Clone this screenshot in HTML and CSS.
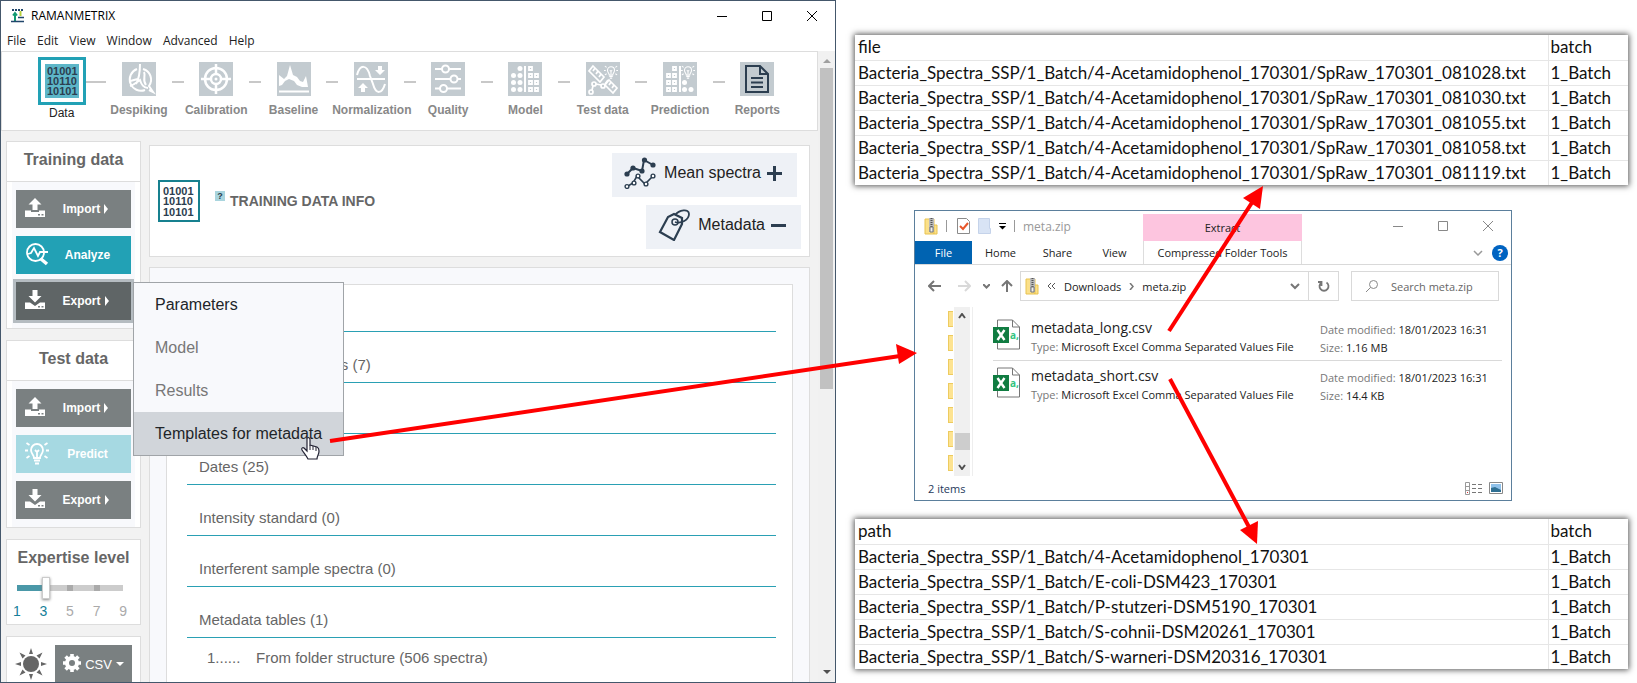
FILE: index.html
```html
<!DOCTYPE html>
<html lang="en">
<head>
<meta charset="UTF-8">
<meta name="viewport" content="width=device-width, initial-scale=1.0">
<title>RAMANMETRIX</title>
<link rel="stylesheet" href="styles.css">
</head>
<body>

<!-- shared symbols -->
<svg class="defs" width="0" height="0">
    <symbol id="upload" viewBox="0 0 20 19">
        <path d="M10 0l6.500 6.500h-4V12h-5V6.500h-4z M0 12.500h6v1.500h8v-1.500h6V19H0z" fill="#fff"/>
        <path d="M13 16h2v1.500h-2z M16.500 16h2v1.500h-2z" fill="#7a8081"/>
    </symbol>
    <symbol id="download" viewBox="0 0 20 19">
        <path d="M7.500 0h5v6h4L10 12.500 3.500 6h4z M0 12.500h5l5 3.500 5-3.500h5V19H0z" fill="#fff"/>
        <path d="M13 16h2v1.500h-2z M16.500 16h2v1.500h-2z" fill="#7a8081"/>
    </symbol>
    <symbol id="bulb" viewBox="0 0 24 24">
        <path d="M9 17c0-3-3-4-3-8a6 6 0 0 1 12 0c0 4-3 5-3 8z M12 16v-5l-2-2 M12 11l2-2 M9 19.500h6 M10 22.500h4 M0 9.500h3 M21 9.500h3 M1.500 2l3 2 M22.500 2l-3 2 M1.500 17l3-2 M22.500 17l-3-2" fill="none" stroke="currentColor" stroke-width="1.800"/>
    </symbol>
    <symbol id="zip" viewBox="0 0 14 17">
        <path d="M1 1h9v15H1z" fill="#fbe08a" stroke="#e8c350"/>
        <path d="M10 7h3v9h-3z" fill="#fbe08a" stroke="#e8c350"/>
        <path d="M5 0h5v14H5z" fill="#b9b9b9"/>
        <path d="M7.500 0v9" stroke="#555" stroke-width="2" stroke-dasharray="1 1"/>
        <path d="M6 9h3v5H6z" fill="#eee" stroke="#777"/>
    </symbol>
    <symbol id="csv" viewBox="0 0 28 31">
        <path d="M4.500 1h15l7 7v22h-22z" fill="#fff" stroke="#767676"/>
        <path d="M19.500 1v7h7" fill="none" stroke="#767676"/>
        <path d="M0 8h16v16H0z" fill="#107c41"/>
        <path d="M4.500 11l7 10M11.500 11l-7 10" stroke="#fff" stroke-width="2.400"/>
    </symbol>
    <symbol id="up-caret" viewBox="0 0 8 5"><path d="M0 5l4-4 4 4z" fill="#a0a0a0"/></symbol>
</svg>

<div class="page">

    <section class="app">
        <header class="titlebar">
            <svg class="logo" width="13" height="14" viewBox="0 0 13 14">
                <path d="M1 1h11" stroke="#20466b" stroke-width="2" stroke-dasharray="2 1"/>
                <path d="M4 12V4M2 6.500L4 4l2 2.500" stroke="#129a72" stroke-width="2" fill="none"/>
                <path d="M9.500 2v5" stroke="#b6cf3c" stroke-width="2"/>
                <path d="M7 8.500h6M0 12.500h13" stroke="#20466b" stroke-width="1.500"/>
            </svg>
            <span class="app-name">RAMANMETRIX</span>
            <div class="win-buttons">
                <button type="button" aria-label="Minimize"><svg width="12" height="12"><path d="M1 6.500h10" stroke="#000"/></svg></button>
                <button type="button" aria-label="Maximize"><svg width="12" height="12"><path d="M1.500 1.500h9v9h-9z" stroke="#000" fill="none"/></svg></button>
                <button type="button" aria-label="Close"><svg width="12" height="12"><path d="M1 1l10 10M11 1L1 11" stroke="#000"/></svg></button>
            </div>
        </header>
        <nav class="menubar">
            <button type="button">File</button>
            <button type="button">Edit</button>
            <button type="button">View</button>
            <button type="button">Window</button>
            <button type="button">Advanced</button>
            <button type="button">Help</button>
        </nav>

        <div class="viewport">
            <div class="content">
                <ol class="steps">
                    <li class="step current">
                        <div class="step-row">
                            <i></i>
                            <a href="#data" class="step-box" aria-label="Data"><svg width="34" height="34" viewBox="0 0 34 34"><path d="M0 0h34v34H0z" fill="#5db6c8"/><g class="bits"><text x="2" y="11">01001</text><text x="2" y="21">10110</text><text x="2" y="31">10101</text></g></svg></a>
                            <i></i>
                        </div>
                        <span>Data</span>
                    </li>
                    <li class="step">
                        <div class="step-row"><i></i>
                            <svg width="34" height="34" viewBox="0 0 34 34"><path d="M0 0h34v34H0z" class="tile"/><g fill="none" stroke="#fff" stroke-width="2"><path d="M15 7a11 11 0 1 0 8 21M21 7a11 11 0 0 1 6 17l4 6-4-2"/><path d="M18 2c0 9-1 15-4 20M7 19c4 0 6-2 10-2M8 24c4-1 7-4 10-6 1 4 4 8 8 8M22 10c2 4-2 8 2 13"/></g></svg>
                        <i></i></div>
                        <span>Despiking</span>
                    </li>
                    <li class="step">
                        <div class="step-row"><i></i>
                            <svg width="34" height="34" viewBox="0 0 34 34"><path d="M0 0h34v34H0z" class="tile"/><g fill="none" stroke="#fff" stroke-width="2.500"><circle cx="17" cy="17" r="11"/><circle cx="17" cy="17" r="5"/><path d="M17 2v10M17 22v10M2 17h10M22 17h10"/></g><circle cx="17" cy="17" r="1.500" fill="#fff"/></svg>
                        <i></i></div>
                        <span>Calibration</span>
                    </li>
                    <li class="step">
                        <div class="step-row"><i></i>
                            <svg width="34" height="34" viewBox="0 0 34 34"><path d="M0 0h34v34H0z" class="tile"/><path d="M2 13l5 4 3-3 3-11 3 10 4 2 3 4 3 1 3-6 2 11-6 0-5-2-3-4-5-2-4 2-3 4-3 1z" fill="#fff"/><path d="M2 29.500h30" stroke="#fff" stroke-width="2"/></svg>
                        <i></i></div>
                        <span>Baseline</span>
                    </li>
                    <li class="step">
                        <div class="step-row"><i></i>
                            <svg width="34" height="34" viewBox="0 0 34 34"><path d="M0 0h34v34H0z" class="tile"/><path d="M3 17h28M3 13C6 2 13 2 16 14l3 8c3 11 9 10 12 0" fill="none" stroke="#fff" stroke-width="2"/><path d="M24 4h4v4h3l-5 5-5-5h3zM7 30h4v-4h3l-5-5-5 5h3z" fill="#fff"/></svg>
                        <i></i></div>
                        <span>Normalization</span>
                    </li>
                    <li class="step">
                        <div class="step-row"><i></i>
                            <svg width="34" height="34" viewBox="0 0 34 34"><path d="M0 0h34v34H0z" class="tile"/><g fill="none" stroke="#fff" stroke-width="2"><path d="M4 7h7M18 7h12M4 17h16M26 17h4M4 26.500h5M16 26.500h14"/><circle cx="14.500" cy="7" r="3.500"/><circle cx="23" cy="17" r="3.500"/><circle cx="12.500" cy="26.500" r="3.500"/></g></svg>
                        <i></i></div>
                        <span>Quality</span>
                    </li>
                    <li class="step">
                        <div class="step-row"><i></i>
                            <svg width="34" height="34" viewBox="0 0 34 34"><path d="M0 0h34v34H0z" class="tile"/><g fill="#fff"><circle cx="12" cy="6.500" r="2.500"/><circle cx="5.500" cy="13.500" r="2.500"/><circle cx="12" cy="13.500" r="2.500"/><circle cx="5.500" cy="20.500" r="2.500"/><circle cx="12" cy="20.500" r="2.500"/><circle cx="5.500" cy="27.500" r="2.500"/><circle cx="12" cy="27.500" r="2.500"/><path d="M16 4h2v26h-2z"/></g><path d="M21 5h3v3h-3z M21 12h3v3h-3z M27 12h3v3h-3z M21 19h3v3h-3z M27 19h3v3h-3z M21 26h3v3h-3z M27 26h3v3h-3z" fill="none" stroke="#fff" stroke-width="1.800"/></svg>
                        <i></i></div>
                        <span>Model</span>
                    </li>
                    <li class="step">
                        <div class="step-row"><i></i>
                            <svg width="34" height="34" viewBox="0 0 34 34"><path d="M0 0h34v34H0z" class="tile"/><g fill="none" stroke="#fff" stroke-width="1.700"><path d="M7 4l11 11-4 5L3 9z M9 6L7 9M12 9l-2 3M15 12l-2 3"/><path d="M23 18l8 8-4 5-8-8z M25 20l-2 3M28 23l-2 3"/><circle cx="5" cy="30" r="2"/><circle cx="8" cy="22" r="2"/><circle cx="17" cy="24" r="2"/><path d="M6 28l1-4M10 22l5 1M19 22l3-4"/></g><use href="#bulb" x="18" y="3" width="14" height="14" color="#fff"/></svg>
                        <i></i></div>
                        <span>Test data</span>
                    </li>
                    <li class="step">
                        <div class="step-row"><i></i>
                            <svg width="34" height="34" viewBox="0 0 34 34"><path d="M0 0h34v34H0z" class="tile"/><path d="M10 5h3v3h-3z M4 12h3v3H4z M10 12h3v3h-3z M4 19h3v3H4z M10 19h3v3h-3z M4 26h3v3H4z M10 26h3v3h-3z" fill="none" stroke="#fff" stroke-width="1.800"/><path d="M16 4h2v26h-2z" fill="#fff"/><g fill="#fff"><circle cx="21.500" cy="20.500" r="2.500"/><circle cx="21.500" cy="27.500" r="2.500"/><circle cx="28" cy="27.500" r="2.500"/></g><use href="#bulb" x="18" y="3" width="14" height="14" color="#fff"/></svg>
                        <i></i></div>
                        <span>Prediction</span>
                    </li>
                    <li class="step">
                        <div class="step-row"><i></i>
                            <svg width="34" height="34" viewBox="0 0 34 34"><path d="M0 0h34v34H0z" class="tile"/><g fill="none" stroke="#2c3e50" stroke-width="2"><path d="M6 4h14l8 8v18H6z M20 4v8h8"/><path d="M11 16h12M11 20.500h12M11 25h12"/></g></svg>
                        <i></i></div>
                        <span>Reports</span>
                    </li>
                </ol>

                <div class="workspace">
                    <aside class="sidebar">
                        <section class="panel">
                            <h2>Training data</h2>
                            <div class="actions">
                                <button type="button" class="action"><svg width="20" height="19"><use href="#upload"/></svg><span>Import<i class="arrow"></i></span></button>
                                <button type="button" class="action teal"><svg width="24" height="24" viewBox="0 0 24 24"><g fill="none" stroke="#fff" stroke-width="1.800"><circle cx="10.500" cy="10.500" r="8.500"/><path d="M3 12l3-1 3-5 4 8 2-4h8"/></g><path d="M16 17l6 5" stroke="#fff" stroke-width="3.500"/></svg><span>Analyze</span></button>
                                <div class="dropdown">
                                    <button type="button" class="action open" aria-expanded="true"><svg width="20" height="19"><use href="#download"/></svg><span>Export<i class="arrow"></i></span></button>
                                    <div class="menu">
                                        <button type="button">Parameters</button>
                                        <button type="button" disabled>Model</button>
                                        <button type="button" disabled>Results</button>
                                        <button type="button" class="hover">Templates for metadata</button>
                                    </div>
                                </div>
                            </div>
                        </section>

                        <section class="panel">
                            <h2>Test data</h2>
                            <div class="actions">
                                <button type="button" class="action"><svg width="20" height="19"><use href="#upload"/></svg><span>Import<i class="arrow"></i></span></button>
                                <button type="button" class="action pale"><svg width="24" height="24"><use href="#bulb"/></svg><span>Predict</span></button>
                                <button type="button" class="action"><svg width="20" height="19"><use href="#download"/></svg><span>Export<i class="arrow"></i></span></button>
                            </div>
                        </section>

                        <section class="panel level">
                            <label for="level">Expertise level</label>
                            <input type="range" id="level" min="1" max="9" step="2" value="3">
                            <div class="numbers"><b>1</b><b>3</b><span>5</span><span>7</span><span>9</span></div>
                        </section>

                        <section class="panel bottom">
                            <svg width="32" height="32" viewBox="0 0 32 32"><circle cx="16" cy="16" r="8" fill="#666"/><path d="M14 6l2-6 2 6z M14 26l2 6 2-6z M6 14l-6 2 6 2z M26 14l6 2-6 2z M7.500 10.500L4.500 4.500l6 3z M24.500 10.500l3-6-6 3z M7.500 21.500l-3 6 6-3z M24.500 21.500l3 6-6-3z" fill="#666"/></svg>
                            <button type="button" class="csv-button">
                                <svg width="18" height="18" viewBox="0 0 18 18"><circle cx="9" cy="9" r="5" fill="none" stroke="#fff" stroke-width="4"/><path d="M9 0v3M9 15v3M0 9h3M15 9h3M2.600 2.600l2.200 2.200M13.200 13.200l2.200 2.200M2.600 15.400l2.200-2.200M13.200 4.800l2.200-2.200" stroke="#fff" stroke-width="3.600"/></svg>
                                <span>CSV</span><i class="caret"></i>
                            </button>
                        </section>
                    </aside>

                    <main class="main">
                        <section class="info">
                            <svg class="info-icon" width="42" height="42" viewBox="0 0 42 42"><path d="M1 1h40v40H1z" fill="#fff" stroke="#16808f" stroke-width="2"/><g class="bits"><text x="5" y="15">01001</text><text x="5" y="25">10110</text><text x="5" y="36">10101</text></g></svg>
                            <h1><sup>?</sup>TRAINING DATA INFO</h1>
                            <div class="toggles">
                                <button type="button" class="toggle spectra">
                                    <svg width="32" height="32" viewBox="0 0 32 32"><g fill="none" stroke="#2c3e50" stroke-width="2"><path d="M3 17l6-6 9 3L20 3l9 5"/><path d="M4 29l5-3 4-7 8 8 8-8" stroke-width="1.600"/></g><g fill="#2c3e50"><circle cx="3" cy="17" r="2.600"/><circle cx="9" cy="11" r="2.600"/><circle cx="18" cy="14" r="2.600"/><circle cx="20.500" cy="3" r="2.600"/><circle cx="29" cy="8" r="2.600"/></g><g fill="#fff" stroke="#2c3e50" stroke-width="1.400"><circle cx="3" cy="29.500" r="1.900"/><circle cx="10" cy="26" r="1.900"/><circle cx="14" cy="19" r="1.900"/><circle cx="22" cy="27" r="1.900"/><circle cx="29" cy="19" r="1.900"/></g></svg>
                                    <span>Mean spectra</span>
                                    <svg width="15" height="15"><path d="M0 7.500h15M7.500 0v15" stroke="#2c3e50" stroke-width="3"/></svg>
                                </button>
                                <button type="button" class="toggle">
                                    <svg width="32" height="32" viewBox="0 0 32 32"><g fill="none" stroke="#2c3e50"><path d="M2 23L10 8l6-3 8 4v6l-8 16z" stroke-width="2.200"/><circle cx="17" cy="13" r="3" stroke-width="1.500"/><path d="M17 13c6 2 14-2 14-8 0-6-10-4-14 1" stroke-width="1.800"/></g></svg>
                                    <span>Metadata</span>
                                    <svg width="15" height="15"><path d="M0 7.500h15" stroke="#2c3e50" stroke-width="3"/></svg>
                                </button>
                            </div>
                        </section>

                        <section class="details">
                            <div class="list">
                                <h3></h3>
                                <h3>Reference substances (7)</h3>
                                <h3></h3>
                                <h3>Dates (25)</h3>
                                <h3>Intensity standard (0)</h3>
                                <h3>Interferent sample spectra (0)</h3>
                                <h3>Metadata tables (1)</h3>
                                <p><span>1......</span>From folder structure (506 spectra)</p>
                            </div>
                        </section>
                    </main>
                </div>
            </div>
            <div class="scroll">
                <svg width="8" height="5"><use href="#up-caret"/></svg>
                <div class="scroll-thumb"></div>
                <svg width="8" height="5"><path d="M0 0h8L4 4z" fill="#505050"/></svg>
            </div>
        </div>
    </section>

    <section class="side">
        <table class="sheet">
            <tr><th>file</th><th class="batch">batch</th></tr>
            <tr><td>Bacteria_Spectra_SSP/1_Batch/4-Acetamidophenol_170301/SpRaw_170301_081028.txt</td><td>1_Batch</td></tr>
            <tr><td>Bacteria_Spectra_SSP/1_Batch/4-Acetamidophenol_170301/SpRaw_170301_081030.txt</td><td>1_Batch</td></tr>
            <tr><td>Bacteria_Spectra_SSP/1_Batch/4-Acetamidophenol_170301/SpRaw_170301_081055.txt</td><td>1_Batch</td></tr>
            <tr><td>Bacteria_Spectra_SSP/1_Batch/4-Acetamidophenol_170301/SpRaw_170301_081058.txt</td><td>1_Batch</td></tr>
            <tr><td>Bacteria_Spectra_SSP/1_Batch/4-Acetamidophenol_170301/SpRaw_170301_081119.txt</td><td>1_Batch</td></tr>
        </table>

        <section class="explorer">
            <header class="ex-title">
                <svg width="14" height="17"><use href="#zip"/></svg>
                <i class="bar"></i>
                <svg class="check" width="13" height="16" viewBox="0 0 13 16"><path d="M.5.5h9l3 3v12H.5z" fill="#fff" stroke="#8a8a8a"/><path d="M3 8l3 3 5-6" fill="none" stroke="#e8562a" stroke-width="2"/></svg>
                <svg width="13" height="16" viewBox="0 0 13 16"><path d="M.5.5h11v10h1v5H.5z" fill="#d9e4f5" stroke="#c5d3ea"/></svg>
                <svg width="7" height="7"><path d="M0 .5h7" stroke="#000"/><path d="M0 3h7L3.500 6.500z"/></svg>
                <i class="bar"></i>
                <span class="zip-name">meta.zip</span>
                <span class="extract">Extract</span>
                <div class="ex-buttons">
                    <button type="button" aria-label="Minimize"><svg width="12" height="12"><path d="M1 6.500h10" stroke="#888"/></svg></button>
                    <button type="button" aria-label="Maximize"><svg width="12" height="12"><path d="M1.500 1.500h9v9h-9z" stroke="#888" fill="none"/></svg></button>
                    <button type="button" aria-label="Close"><svg width="12" height="12"><path d="M1 1l10 10M11 1L1 11" stroke="#888"/></svg></button>
                </div>
            </header>
            <nav class="ribbon">
                <button type="button" class="file">File</button>
                <button type="button">Home</button>
                <button type="button">Share</button>
                <button type="button">View</button>
                <button type="button" class="tools">Compressed Folder Tools</button>
                <span class="ribbon-right">
                    <svg width="10" height="6"><path d="M1 1l4 4 4-4" fill="none" stroke="#999" stroke-width="1.500"/></svg>
                    <button type="button" class="help">?</button>
                </span>
            </nav>
            <div class="address">
                <svg width="13" height="12"><path d="M13 6H2M6 1L1 6l5 5" fill="none" stroke="#767676" stroke-width="2"/></svg>
                <svg class="forward" width="13" height="12"><path d="M0 6h11M7 1l5 5-5 5" fill="none" stroke="#d9d9d9" stroke-width="2"/></svg>
                <svg class="recent" width="7" height="5"><path d="M0 0l3.500 3.500L7 0" fill="none" stroke="#767676" stroke-width="2"/></svg>
                <svg class="up" width="12" height="12"><path d="M6 12V2M1 6l5-5 5 5" fill="none" stroke="#767676" stroke-width="2"/></svg>
                <div class="path">
                    <svg width="14" height="17"><use href="#zip"/></svg>
                    <svg width="9" height="7"><path d="M4 0L1 3l3 3M8 0L5 3l3 3" fill="none" stroke="#555"/></svg>
                    <a href="#downloads">Downloads</a>
                    <svg width="5" height="7"><path d="M1 0l3 3.500L1 7" fill="none" stroke="#777" stroke-width="1.500"/></svg>
                    <a href="#meta">meta.zip</a>
                    <svg class="path-more" width="10" height="7"><path d="M1 1l4 4 4-4" fill="none" stroke="#767676" stroke-width="2"/></svg>
                    <button type="button" class="refresh" aria-label="Refresh"><svg width="12" height="12"><path d="M8.500 2.500a4.500 4.500 0 1 1-5 0M3.500 6V2H0" fill="none" stroke="#767676" stroke-width="1.800"/></svg></button>
                </div>
                <label class="search">
                    <svg width="12" height="12"><circle cx="7.500" cy="4.500" r="4" fill="none" stroke="#888"/><path d="M4.500 7.500L0 12" stroke="#888"/></svg>
                    <input type="text" placeholder="Search meta.zip">
                </label>
            </div>
            <div class="ex-body">
                <div class="tree"><i></i><i></i><i></i><i></i><i></i><i></i><i></i></div>
                <div class="tree-scroll">
                    <svg width="8" height="6"><path d="M1 5l3-4 3 4" fill="none" stroke="#505050" stroke-width="2"/></svg>
                    <div class="tree-thumb"></div>
                    <svg width="8" height="6"><path d="M1 1l3 4 3-4" fill="none" stroke="#505050" stroke-width="2"/></svg>
                </div>
                <ul class="files">
                    <li>
                        <svg width="28" height="31"><use href="#csv"/><text x="17" y="20" class="csv-text">a,</text></svg>
                        <div class="file-name"><strong>metadata_long.csv</strong><p><span>Type:</span> Microsoft Excel Comma Separated Values File</p></div>
                        <div class="file-meta"><p><span>Date modified:</span> 18/01/2023 16:31</p><p><span>Size:</span> 1.16 MB</p></div>
                    </li>
                    <li>
                        <svg width="28" height="31"><use href="#csv"/><text x="17" y="20" class="csv-text">a,</text></svg>
                        <div class="file-name"><strong>metadata_short.csv</strong><p><span>Type:</span> Microsoft Excel Comma Separated Values File</p></div>
                        <div class="file-meta"><p><span>Date modified:</span> 18/01/2023 16:31</p><p><span>Size:</span> 14.4 KB</p></div>
                    </li>
                </ul>
            </div>
            <footer class="status">
                <span>2 items</span>
                <svg width="17" height="13" viewBox="0 0 17 13"><path d="M.5.5h4v12h-4z M.5 4.500h4M.5 8.500h4" fill="none" stroke="#999"/><path d="M7 2.500h10M7 6.500h10M7 10.500h10" stroke="#777" stroke-dasharray="4 2"/><path d="M2 10h1v1H2z" fill="#d33"/></svg>
                <svg width="14" height="12" viewBox="0 0 14 12"><path d="M.5.5h13v11H.5z" fill="#fff" stroke="#888"/><path d="M2 2h10v8H2z" fill="#8fc1ea"/><path d="M2 6l4-1 6 3v2H2z" fill="#2f6f92"/></svg>
            </footer>
        </section>

        <table class="sheet">
            <tr><th>path</th><th class="batch">batch</th></tr>
            <tr><td>Bacteria_Spectra_SSP/1_Batch/4-Acetamidophenol_170301</td><td>1_Batch</td></tr>
            <tr><td>Bacteria_Spectra_SSP/1_Batch/E-coli-DSM423_170301</td><td>1_Batch</td></tr>
            <tr><td>Bacteria_Spectra_SSP/1_Batch/P-stutzeri-DSM5190_170301</td><td>1_Batch</td></tr>
            <tr><td>Bacteria_Spectra_SSP/1_Batch/S-cohnii-DSM20261_170301</td><td>1_Batch</td></tr>
            <tr><td>Bacteria_Spectra_SSP/1_Batch/S-warneri-DSM20316_170301</td><td>1_Batch</td></tr>
        </table>
    </section>

    <!-- arrows and mouse pointer on top of everything -->
    <svg class="overlay" viewBox="0 0 1637 683">
        <g fill="none" stroke="#f00" stroke-width="4">
            <path d="M330 441L900 356"/>
            <path d="M1169 331L1253 201"/>
            <path d="M1170 379L1249 527"/>
        </g>
        <g fill="#f00">
            <path d="M917 353l-21-9 3 20z"/>
            <path d="M1263 186l-20 12 17 11z"/>
            <path d="M1257 544l1-23-18 9z"/>
        </g>
        <path d="M307 438c2-1 3 0 3 2v5l7 2c2 1 2 2 2 4 0 4-2 5-2 8h-9c-2-4-4-6-6-9-1-2 1-3 2-2l3 3z" fill="#fff" stroke="#223" stroke-width="1.200"/>
        <path d="M310 445v5M313 446v4M316 447v4" stroke="#223"/>
    </svg>
</div>

</body>
</html>
```
FILE: styles.css
```css
* {
    box-sizing: border-box;
}
body {
    margin: 0;
    background: #fff;
    font-family: "Liberation Sans", Arial, sans-serif;
    color: #666;
}
button {
    font: inherit;
    color: inherit;
    background: none;
    border: none;
    padding: 0;
}
svg {
    display: block;
    flex: none;
}
h1, h2, h3, p, ol, ul {
    margin: 0;
    padding: 0;
    list-style: none;
}
a {
    color: inherit;
    text-decoration: none;
}
.defs {
    position: absolute;
}
.page {
    position: relative;
    display: grid;
    grid-template-columns: minmax(0, 836fr) minmax(0, 801fr);
    height: 100vh;
    overflow: hidden;
}
.overlay {
    position: absolute;
    top: 0;
    left: 0;
    width: 100%;
    z-index: 10;
    pointer-events: none;
}

/* main application */
.app {
    display: flex;
    flex-direction: column;
    height: 100vh;
    border: 1px solid #44576b;
    overflow: hidden;
}
.titlebar {
    display: flex;
    align-items: center;
    gap: 7px;
    height: 29px;
    padding-left: 10px;
    font-family: "Open Sans", sans-serif;
    font-size: 12px;
    color: #000;
}
.win-buttons {
    display: flex;
    gap: 33px;
    margin-left: auto;
    padding-right: 17px;
}
.menubar {
    display: flex;
    gap: 11px;
    height: 21px;
    padding-left: 6px;
    font-family: "Open Sans", sans-serif;
    font-size: 12px;
    line-height: 20px;
    color: #222;
}
.viewport {
    display: flex;
    flex: 1;
    min-height: 0;
}
.content {
    flex: 1;
    min-width: 0;
    background: #f2f2f2;
    overflow: hidden;
}
.scroll {
    display: flex;
    flex-direction: column;
    align-items: center;
    width: 17px;
    padding: 7px 0;
    background: #f1f1f1;
}
.scroll svg:last-child {
    margin-top: auto;
}
.scroll-thumb {
    width: 13px;
    height: 52%;
    margin-top: 5px;
    background: #c1c1c1;
}
.steps {
    display: grid;
    grid-template-columns: repeat(10, minmax(0, 1fr));
    height: 80px;
    padding: 5px 21px 0;
    background: #fff;
    border: 1px solid #ddd;
}
.step {
    font-size: 12px;
    font-weight: bold;
    line-height: 16px;
    text-align: center;
    color: #888;
}
.step span {
    white-space: nowrap;
}
.step-row {
    display: flex;
    justify-content: space-between;
    height: 45px;
}
.step-row i {
    width: 6px;
    height: 2px;
    margin-top: 24px;
    background: #c8c8c8;
}
.step-row svg {
    margin-top: 5px;
}
.step-row i:first-child {
    margin-right: auto;
}
.step-row i:last-child {
    margin-left: auto;
}
.current {
    font-weight: normal;
    color: #222;
}
.current .step-row {
    height: 48px;
}
.current i {
    flex: 1;
}
.current i:first-child {
    background: none;
}
.step:last-child i:last-child {
    background: none;
}
.step-box {
    width: 48px;
    height: 48px;
    padding: 4px;
    border: 3px solid #22a1b5;
}
.step-box svg {
    margin: 0;
}
.tile {
    fill: #c3cbd0;
}
.bits {
    font-family: "Liberation Sans", Arial, sans-serif;
    font-size: 11px;
    font-weight: bold;
    fill: #2c3e50;
}
.workspace {
    display: flex;
    gap: 8px;
    padding: 10px 8px 0 5px;
}
.sidebar {
    display: flex;
    flex-direction: column;
    gap: 11px;
    width: 135px;
}
.panel {
    background: #fff;
    border: 1px solid #ddd;
}
.panel h2, .level label {
    font-size: 16px;
    font-weight: bold;
    text-align: center;
}
.panel h2 {
    line-height: 36px;
    padding-bottom: 3px;
    border-bottom: 1px solid #ddd;
}
.actions {
    display: flex;
    flex-direction: column;
    gap: 8px;
    margin: 0 5px;
    padding: 8px 4px;
    background: #f8f9fc;
}
.action {
    display: flex;
    align-items: center;
    width: 100%;
    height: 38px;
    padding: 0 9px;
    background: #7a8081;
    color: #fff;
    font-size: 12px;
    font-weight: bold;
}
.action svg {
    margin-bottom: 3px;
}
.action span {
    display: flex;
    flex: 1;
    align-items: center;
    justify-content: center;
    gap: 4px;
    padding-left: 4px;
}
.arrow {
    border: 5px solid transparent;
    border-left: 4px solid #fff;
    border-right: 0;
}
.teal {
    background: #22a1b5;
}
.pale {
    background: #a6d9e2;
}
.open {
    background: #5f6566;
    box-shadow: 0 0 0 3px #b5bcc1;
}
.dropdown {
    position: relative;
}
.menu {
    position: absolute;
    top: 0;
    left: calc(100% + 2px);
    z-index: 5;
    width: 211px;
    background: #f8f9fc;
    border: 1px solid #a0a4a8;
}
.menu button {
    display: block;
    width: 100%;
    height: 43px;
    padding-left: 21px;
    text-align: left;
    font-size: 16px;
    color: #212529;
}
.menu button:disabled {
    color: #777;
}
.menu .hover {
    background: #d1d5da;
}
.level {
    height: 86px;
    padding: 8px 10px;
}
.level label {
    display: block;
    line-height: 20px;
    white-space: nowrap;
}
#level {
    display: block;
    appearance: none;
    width: 106px;
    height: 6px;
    margin: 17px 0 12px;
    background:
        linear-gradient(90deg, #4a98a8 28px, transparent 28px),
        linear-gradient(90deg, transparent 50px, #aaa 50px, #aaa 56px, transparent 56px, transparent 77px, #aaa 77px, #aaa 83px, transparent 83px),
        #ccc;
}
#level::-webkit-slider-thumb {
    appearance: none;
    width: 8px;
    height: 22px;
    background: #fff;
    border: 1px solid #ccc;
    box-shadow: 0 1px 3px #888;
}
.numbers {
    display: flex;
    justify-content: space-between;
    width: 114px;
    margin-left: -4px;
    font-size: 14px;
    line-height: 16px;
    color: #aaa;
}
.numbers b {
    font-weight: normal;
    color: #16809a;
}
.bottom {
    display: flex;
    gap: 8px;
    height: 60px;
    padding: 8px 8px 0 8px;
}
.bottom > svg {
    margin-top: 3px;
}
.csv-button {
    display: flex;
    flex: 1;
    align-items: center;
    justify-content: center;
    gap: 4px;
    height: 38px;
    background: #7a8081;
    color: #fff;
    font-size: 13px;
}
.csv-button svg {
    margin-bottom: 3px;
}
.caret {
    border: 4px solid transparent;
    border-top-color: #fff;
    border-bottom: 0;
}
.main {
    flex: 1;
    min-width: 0;
    padding-top: 4px;
}
.info {
    display: flex;
    align-items: center;
    height: 112px;
    padding: 0 8px;
    background: #fff;
    border: 1px solid #ddd;
}
.info h1 {
    display: flex;
    align-items: flex-start;
    margin-left: 15px;
    font-size: 14px;
    font-weight: bold;
    line-height: 20px;
}
.info sup {
    width: 10px;
    height: 10px;
    margin-right: 5px;
    background: #a9d5de;
    color: #2c3e50;
    font-size: 9px;
    line-height: 10px;
    text-align: center;
}
.toggles {
    display: flex;
    flex-direction: column;
    align-items: flex-end;
    gap: 8px;
    margin-left: auto;
}
.toggle {
    display: flex;
    align-items: center;
    gap: 6px;
    height: 44px;
    padding: 0 15px 4px 12px;
    background: #eef1f6;
    color: #222;
    font-size: 16px;
}
.toggle span {
    margin-left: 2px;
}
.spectra {
    margin-right: 4px;
}
.details {
    margin-top: 10px;
    padding: 16px 16px 0;
    background: #f8f9fc;
    border: 1px solid #ddd;
}
.list {
    height: 420px;
    padding: 0 16px 0 20px;
    background: #fff;
    border: 1px solid #ddd;
}
.list h3 {
    height: 51px;
    padding: 17px 0 0 12px;
    border-bottom: 1px solid #2aa0b4;
    font-size: 15px;
    font-weight: normal;
    line-height: 32px;
}
.list h3:first-child {
    height: 47px;
}
.list p {
    padding-left: 20px;
    font-size: 15px;
    line-height: 40px;
}
.list p span {
    display: inline-block;
    width: 49px;
}

/* spreadsheets */
.side {
    padding: 35px 9px 0 19px;
}
.sheet {
    width: 100%;
    border-collapse: collapse;
    background: #fff;
    box-shadow: 0 0 6px 1px #555;
    font-family: Lato, "Open Sans", sans-serif;
    font-size: 17px;
    color: #111;
}
.sheet th, .sheet td {
    height: 25px;
    padding: 0 3px;
    font-weight: normal;
    line-height: 24px;
    text-align: left;
    white-space: nowrap;
    border-bottom: 1px solid #e6e6e6;
}
.sheet tr:last-child td {
    border-bottom: 0;
}
.sheet td:last-child, .sheet th:last-child {
    padding-left: 2px;
    border-left: 1px solid #e6e6e6;
}
.sheet .batch {
    width: 80px;
}

/* file explorer */
.explorer {
    display: flex;
    flex-direction: column;
    height: 291px;
    margin: 25px 116px 18px 59px;
    border: 1px solid #5b7f9c;
    font-family: "Open Sans", sans-serif;
    font-size: 11px;
    color: #222;
}
.ex-title {
    display: flex;
    align-items: center;
    gap: 8px;
    height: 30px;
    padding-left: 9px;
}
.bar {
    width: 1px;
    height: 12px;
    background: #999;
}
.check {
    margin-left: 2px;
}
.zip-name {
    width: 112px;
    font-size: 12px;
    color: #999;
}
.extract {
    align-self: flex-end;
    width: 159px;
    line-height: 27px;
    text-align: center;
    background: #fdc5df;
}
.ex-buttons {
    display: flex;
    gap: 33px;
    margin-left: auto;
    padding-right: 17px;
}
.ribbon {
    display: flex;
    align-items: center;
    height: 24px;
    border-bottom: 1px solid #d9d9d9;
}
.ribbon button {
    width: 57px;
    line-height: 23px;
}
.ribbon .file {
    background: #0063b1;
    color: #fff;
}
.ribbon .tools {
    width: 159px;
    border-left: 1px solid #ddd;
    border-right: 1px solid #ddd;
}
.ribbon-right {
    display: flex;
    align-items: center;
    gap: 9px;
    margin-left: auto;
    padding-right: 3px;
}
.ribbon .help {
    width: 16px;
    height: 16px;
    border-radius: 50%;
    background: #0063c1;
    color: #fff;
    font-weight: bold;
    line-height: 16px;
}
.address {
    display: flex;
    align-items: center;
    height: 42px;
    padding: 0 12px 0 13px;
}
.forward {
    margin-left: 17px;
}
.recent {
    margin-left: 12px;
}
.up {
    margin-left: 11px;
}
.path {
    display: flex;
    flex: 1;
    align-items: center;
    gap: 8px;
    height: 30px;
    margin: 0 12px 0 7px;
    padding-left: 4px;
    border: 1px solid #d9d9d9;
}
.path-more {
    margin-left: auto;
}
.refresh {
    display: flex;
    align-items: center;
    justify-content: center;
    width: 30px;
    height: 28px;
    border-left: 1px solid #d9d9d9;
}
.search {
    display: flex;
    align-items: center;
    gap: 13px;
    width: 148px;
    height: 30px;
    padding-left: 14px;
    border: 1px solid #d9d9d9;
}
.search input {
    width: 100px;
    padding: 0;
    border: 0;
    font: inherit;
}
.search input::placeholder {
    color: #666;
}
.ex-body {
    display: flex;
    flex: 1;
    min-height: 0;
}
.tree {
    display: flex;
    flex-direction: column;
    gap: 8px;
    width: 39px;
    padding-top: 4px;
}
.tree i {
    width: 5px;
    height: 16px;
    margin-left: 33px;
    background: #fde391;
    border: 1px solid #edcb5f;
    border-right: 0;
}
.tree-scroll {
    display: flex;
    flex-direction: column;
    align-items: center;
    width: 16px;
    padding: 6px 0;
    background: #f0f0f0;
}
.tree-thumb {
    width: 15px;
    height: 17px;
    margin: auto 0 14px;
    background: #cdcdcd;
}
.files {
    flex: 1;
    margin-left: 2px;
    padding: 6px 9px 0 20px;
    border-left: 1px solid #eee;
}
.files li {
    display: flex;
    height: 48px;
    padding-top: 6px;
    line-height: 18px;
    white-space: nowrap;
}
.files li:first-child {
    border-bottom: 1px solid #d9d9d9;
}
.files span {
    color: #777;
}
.files strong {
    display: block;
    margin-bottom: 1px;
    font-size: 14px;
    font-weight: normal;
}
.file-name {
    flex: 1;
    padding-left: 10px;
}
.file-meta {
    width: 182px;
    padding-top: 2px;
}
.csv-text {
    font-family: "Open Sans", sans-serif;
    font-size: 10px;
    font-weight: bold;
    fill: #33c481;
}
.status {
    display: flex;
    align-items: center;
    gap: 7px;
    height: 24px;
    padding: 0 8px 0 13px;
}
.status span {
    flex: 1;
    color: #1e395b;
}
```
